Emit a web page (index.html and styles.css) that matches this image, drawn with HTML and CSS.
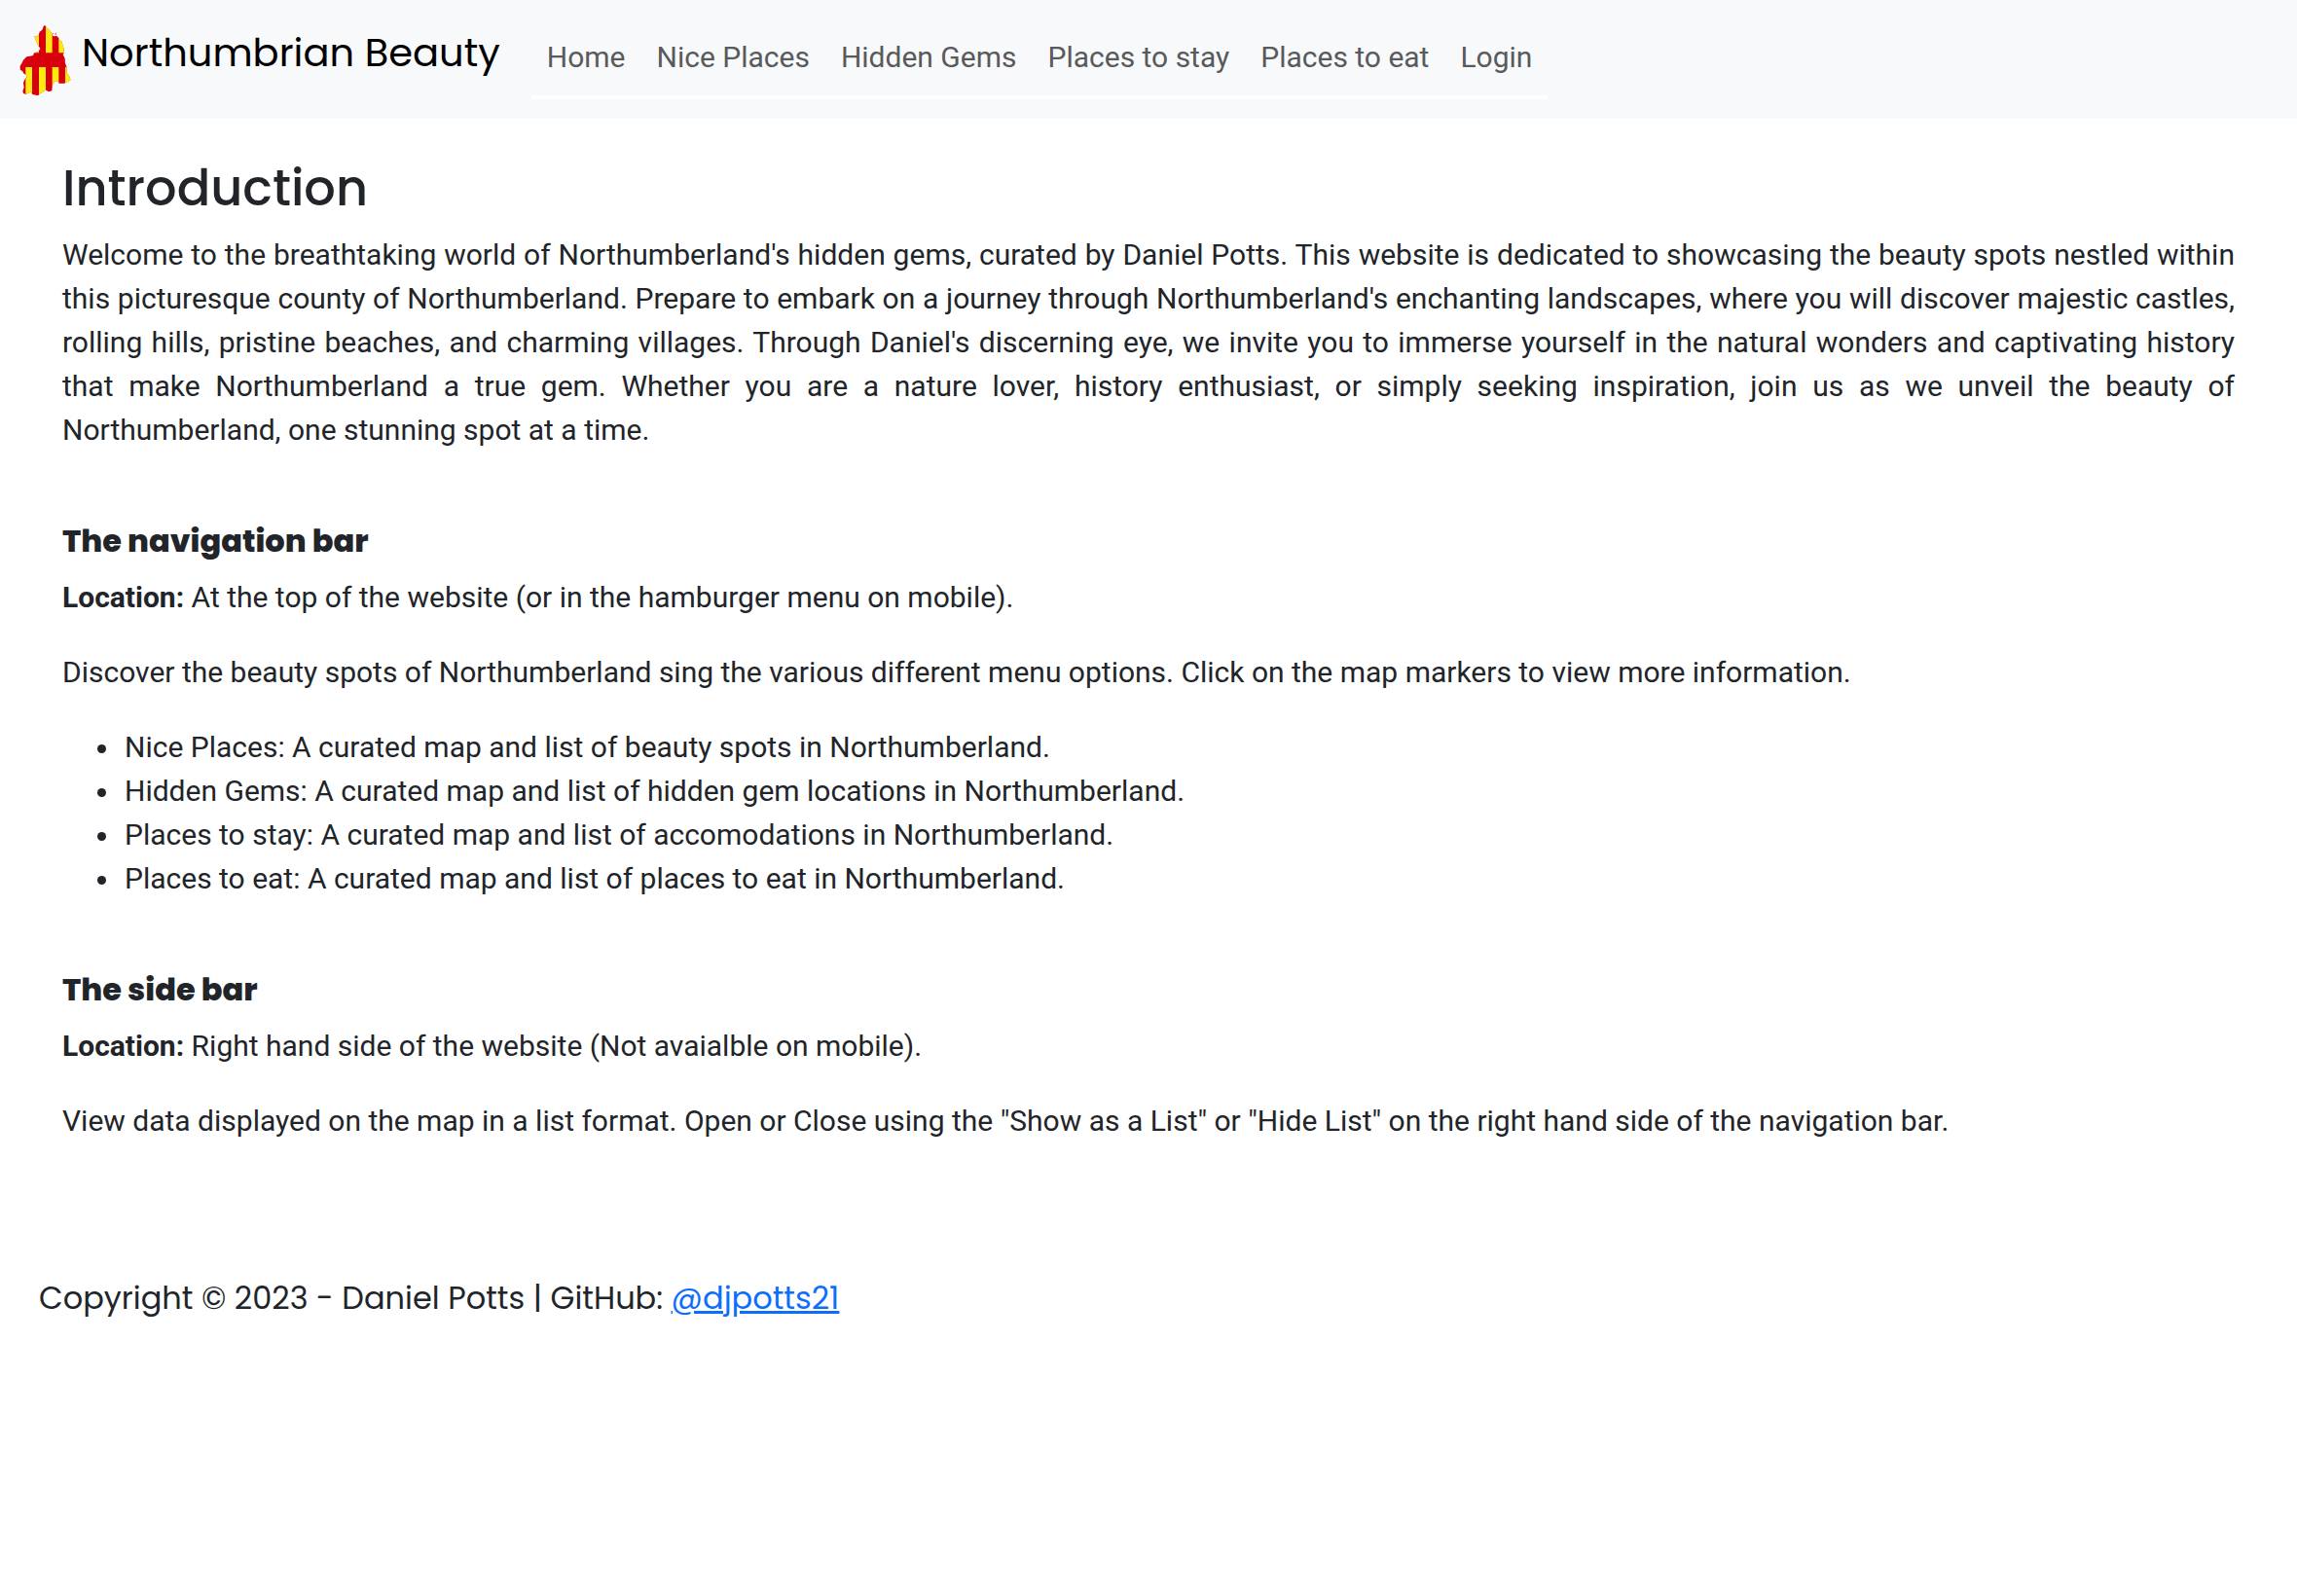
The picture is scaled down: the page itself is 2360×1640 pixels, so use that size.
FILE: index.html
```html
<!DOCTYPE html>
<html lang="en">
<head>
<meta charset="utf-8">
<meta name="viewport" content="width=device-width, initial-scale=1">
<title>Northumbrian Beauty</title>
<link rel="stylesheet" href="styles.css">
</head>
<body>
<header class="navbar">
  <a class="brand" href="#">
    <svg class="brand-logo" viewBox="60 75 159 222" aria-hidden="true">
      <defs>
        <clipPath id="county">
          <path d="M138 77L145 87L152 92L160 103L162 110L168 112L174 110L182 118L184 124L190 128L193 138L196 148L198 162L194 168L200 180L201 195L206 208L206 225L213 235L218 246L208 253L200 254L200 257L182 257L178 250L168 250L162 262L160 280L150 283L140 277L130 285L120 290L118 295L100 291L95 283L80 291L72 288L70 280L74 270L72 255L76 245L83 238L80 230L72 226L70 220L62 215L61 205L67 195L72 185L82 175L92 173L102 171L105 163L118 160L124 150L118 140L114 132L106 113L118 112L122 98L130 92L134 82Z"/>
        </clipPath>
      </defs>
      <g clip-path="url(#county)">
        <path fill="#d9000d" d="M60 75h159v222H60z"/>
        <path fill="#ffea0f" d="M100 75h20v88h-20zM141 75h20v88h-20zM181 75h20v88h-20zM79 207h20v90H79zM120 207h21v90h-21zM161 207h20v90h-20zM201 207h20v90h-20z"/>
      </g>
      <path fill="#e0606a" d="M162 102h3v3h-3zM167 104h6v2h-6zM171 101h3v6h-3z"/>
    </svg>
    <span>Northumbrian Beauty</span>
  </a>
  <nav class="menu">
    <a href="#">Home</a>
    <a href="#">Nice Places</a>
    <a href="#">Hidden Gems</a>
    <a href="#">Places to stay</a>
    <a href="#">Places to eat</a>
    <a href="#">Login</a>
  </nav>
</header>
<main class="content">
  <section>
    <h1>Introduction</h1>
    <p class="lead">Welcome to the breathtaking world of Northumberland's hidden gems, curated by Daniel Potts. This website is dedicated to showcasing the beauty spots nestled within this picturesque county of Northumberland. Prepare to embark on a journey through Northumberland's enchanting landscapes, where you will discover majestic castles, rolling hills, pristine beaches, and charming villages. Through Daniel's discerning eye, we invite you to immerse yourself in the natural wonders and captivating history that make Northumberland a true gem. Whether you are a nature lover, history enthusiast, or simply seeking inspiration, join us as we unveil the beauty of Northumberland, one stunning spot at a time.</p>
  </section>
  <section>
    <h2>The navigation bar</h2>
    <p><strong>Location:</strong> At the top of the website (or in the hamburger menu on mobile).</p>
    <p>Discover the beauty spots of Northumberland sing the various different menu options. Click on the map markers to view more information.</p>
    <ul>
      <li>Nice Places: A curated map and list of beauty spots in Northumberland.</li>
      <li>Hidden Gems: A curated map and list of hidden gem locations in Northumberland.</li>
      <li>Places to stay: A curated map and list of accomodations in Northumberland.</li>
      <li>Places to eat: A curated map and list of places to eat in Northumberland.</li>
    </ul>
  </section>
  <section>
    <h2>The side bar</h2>
    <p><strong>Location:</strong> Right hand side of the website (Not avaialble on mobile).</p>
    <p>View data displayed on the map in a list format. Open or Close using the "Show as a List" or "Hide List" on the right hand side of the navigation bar.</p>
  </section>
</main>
<footer class="footer">Copyright © 2023 - Daniel Potts | GitHub: <a href="#">@djpotts21</a></footer>
</body>
</html>
```
FILE: styles.css
```css
* {
  box-sizing: border-box;
}

body {
  margin: 0;
  background: #fff;
  color: #212529;
  font: 400 30px/45px Roboto, "Liberation Sans", sans-serif;
}

h1,
h2,
p,
ul {
  margin: 0;
}

.navbar {
  display: flex;
  flex-wrap: wrap;
  align-items: flex-start;
  gap: 32px;
  padding: 16px 20px 20px;
  background: #f8f9fb;
}

.brand {
  display: flex;
  gap: 11px;
  color: #000;
  font: 400 40px/76px Poppins, Inter, sans-serif;
  text-decoration: none;
}

.brand-logo {
  width: 53px;
  height: 74px;
  margin-top: 9px;
}

.menu {
  display: flex;
  flex-wrap: wrap;
  padding: 20px 0 17px;
  border-bottom: 4px solid #fff;
}

.menu a {
  padding: 0 16px;
  color: #595a5b;
  text-decoration: none;
}

.content {
  padding: 40px 64px 0;
}

h1 {
  margin-bottom: 15px;
  font: 500 51px/62px Poppins, Inter, sans-serif;
}

h2 {
  margin-bottom: 16px;
  font: 800 32px/38px Poppins, Inter, sans-serif;
}

section + section {
  margin-top: 73px;
}

.lead {
  text-align: justify;
}

p + p,
p + ul {
  margin-top: 32px;
}

ul {
  padding-left: 61px;
}

li {
  padding-left: 3px;
}

.footer {
  padding: 136px 40px 40px;
  font: 400 32px/48px Poppins, Inter, sans-serif;
}

.footer a {
  color: #0d6efd;
}
```
